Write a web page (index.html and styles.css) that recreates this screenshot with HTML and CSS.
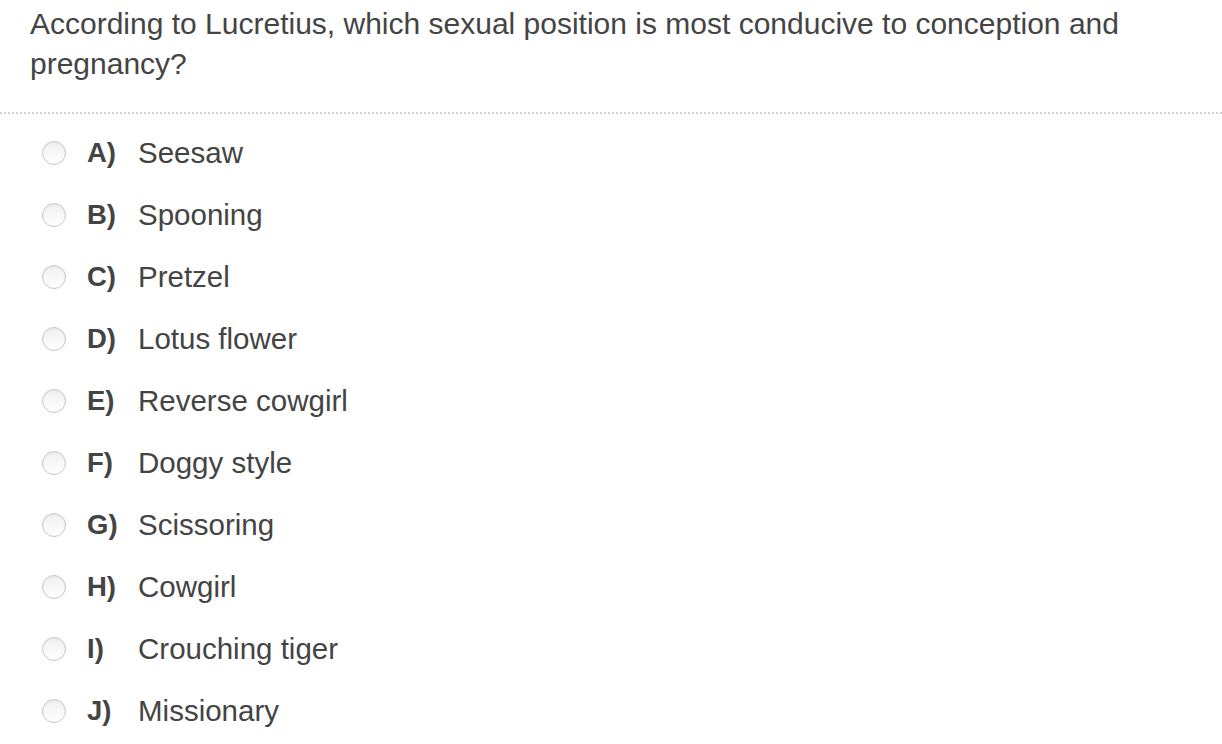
FILE: index.html
```html
<!DOCTYPE html>
<html>
<head>
<meta charset="utf-8">
<link rel="stylesheet" href="styles.css">
</head>
<body>
<div class="question">According to Lucretius, which sexual position is most conducive to conception and pregnancy?</div>
<div class="divider"></div>
<ul class="options">
  <li class="option"><span class="radio"></span><span class="letter">A)</span><span class="text">Seesaw</span></li>
  <li class="option"><span class="radio"></span><span class="letter">B)</span><span class="text">Spooning</span></li>
  <li class="option"><span class="radio"></span><span class="letter">C)</span><span class="text">Pretzel</span></li>
  <li class="option"><span class="radio"></span><span class="letter">D)</span><span class="text">Lotus flower</span></li>
  <li class="option"><span class="radio"></span><span class="letter">E)</span><span class="text">Reverse cowgirl</span></li>
  <li class="option"><span class="radio"></span><span class="letter">F)</span><span class="text">Doggy style</span></li>
  <li class="option"><span class="radio"></span><span class="letter">G)</span><span class="text">Scissoring</span></li>
  <li class="option"><span class="radio"></span><span class="letter">H)</span><span class="text">Cowgirl</span></li>
  <li class="option"><span class="radio"></span><span class="letter">I)</span><span class="text">Crouching tiger</span></li>
  <li class="option"><span class="radio"></span><span class="letter">J)</span><span class="text">Missionary</span></li>
</ul>
</body>
</html>
```
FILE: styles.css
```css
html, body {
  margin: 0;
  padding: 0;
  background: #fff;
}
body {
  font-family: "Liberation Sans", Arial, sans-serif;
  color: #444;
}
.question {
  font-size: 30px;
  padding: 4px 60px 0 30px;
  line-height: 40px;
}
.divider {
  height: 2px;
  margin-top: 28px;
  background-image: repeating-linear-gradient(to right, #d2d2d2 0 2px, transparent 2px 4px);
}
.options {
  list-style: none;
  margin: 0;
  padding: 8px 0 0 42px;
  font-size: 29.5px;
}
.option {
  display: flex;
  align-items: center;
  height: 62px;
}
.radio {
  width: 24px;
  height: 24px;
  border-radius: 50%;
  box-sizing: border-box;
  border: 1px solid #c8c8c8;
  background: linear-gradient(#f0f0f0, #ffffff);
  box-shadow: inset 0 1px 2px rgba(0,0,0,0.05);
  flex: none;
}
.letter {
  font-weight: bold;
  font-size: 27.5px;
  width: 51px;
  margin-left: 21px;
}
.text {
  white-space: nowrap;
}
```
